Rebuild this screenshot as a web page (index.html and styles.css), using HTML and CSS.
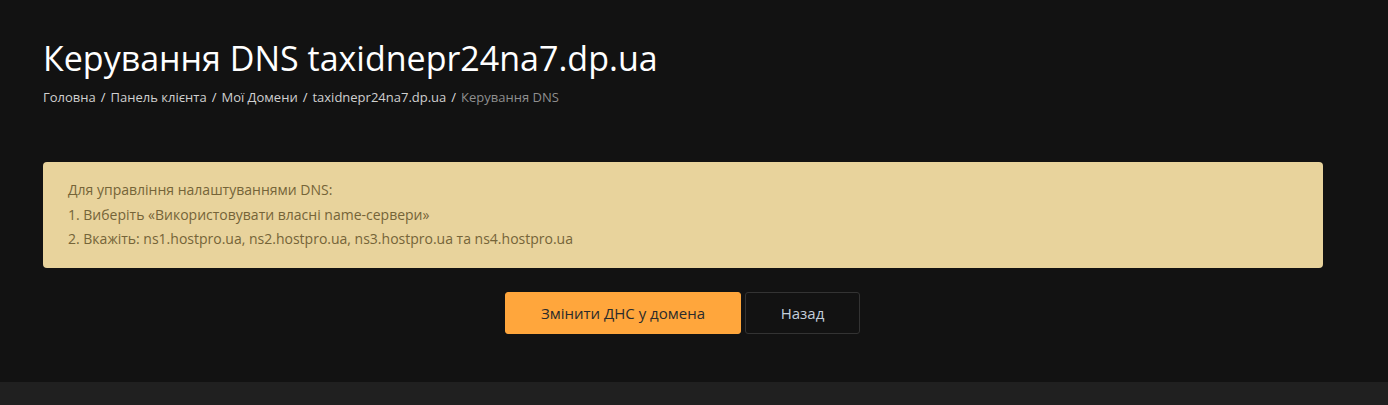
FILE: index.html
```html
<!DOCTYPE html>
<html lang="uk">
<head>
<meta charset="utf-8">
<title>Керування DNS</title>
<link rel="stylesheet" href="styles.css">
</head>
<body>
<main class="page">
  <div class="container">
    <h1 class="title">Керування DNS taxidnepr24na7.dp.ua</h1>
    <nav class="crumbs"><a href="#">Головна</a><span class="sep">/</span><a href="#">Панель клієнта</a><span class="sep">/</span><a href="#">Мої Домени</a><span class="sep">/</span><a href="#">taxidnepr24na7.dp.ua</a><span class="sep">/</span><span class="current">Керування DNS</span></nav>
    <div class="alert">
      <p>Для управління налаштуваннями DNS:</p>
      <p>1. Виберіть «Використовувати власні name-сервери»</p>
      <p>2. Вкажіть: ns1.hostpro.ua, ns2.hostpro.ua, ns3.hostpro.ua та ns4.hostpro.ua</p>
    </div>
    <div class="actions">
      <button class="btn btn-primary" type="button">Змінити ДНС у домена</button>
      <button class="btn btn-default" type="button">Назад</button>
    </div>
  </div>
</main>
<footer class="footer"></footer>
</body>
</html>
```
FILE: styles.css
```css
* { box-sizing: border-box; }
html, body { margin: 0; padding: 0; }
body {
  background: #121212;
  font-family: "Open Sans", "Noto Sans", sans-serif;
  color: #ddd;
  height: 405px;
  overflow: hidden;
}
.page { height: 382px; }
.container {
  width: 1280px;
  margin-left: 43px;
  padding-top: 35px;
}
.title {
  margin: 0;
  font-weight: 400;
  font-size: 34px;
  line-height: 47px;
  color: #fff;
}
.crumbs {
  margin-top: 5px;
  font-size: 13px;
  line-height: 20px;
  color: #e0e0e0;
}
.crumbs a { color: #d0d0d0; text-decoration: none; }
.crumbs .sep { margin: 0 5px; color: #ddd; }
.crumbs .current { color: #8f8f8f; }
.alert {
  margin-top: 55px;
  background: #e8d39c;
  border-radius: 4px;
  padding: 16px 25px 16px;
  color: #756438;
  font-size: 14px;
  line-height: 24.5px;
}
.alert p { margin: 0; }
.actions {
  display: flex;
  justify-content: center;
  gap: 4px;
  margin-top: 24px;
  padding-right: 1px;
}
.btn {
  font-family: inherit;
  font-size: 15px;
  height: 42px;
  border-radius: 3px;
  cursor: pointer;
}
.btn-primary {
  width: 236px;
  background: #ffa63c;
  border: 1px solid #ffa63c;
  color: #2b2b2b;
}
.btn-default {
  width: 115px;
  background: #121212;
  border: 1px solid #333;
  color: #c3cedb;
}
.footer {
  height: 23px;
  background: #202020;
}
```
